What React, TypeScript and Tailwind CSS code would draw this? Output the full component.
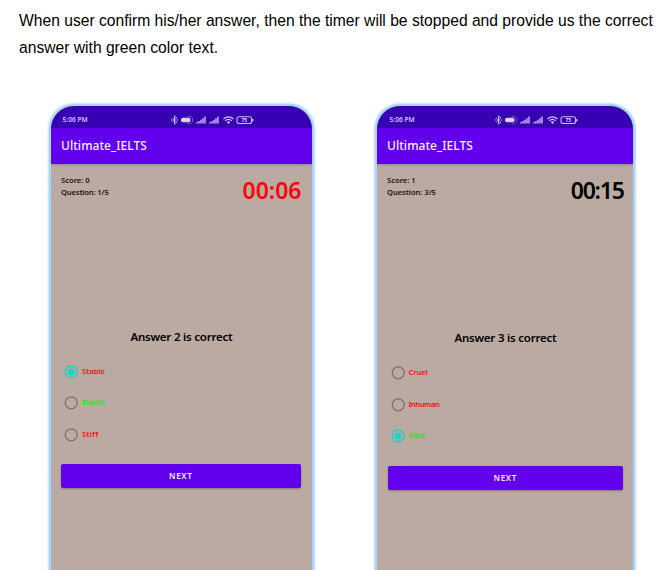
import React from "react";

type Option = { label: string; color: string; spacing: string; selected?: boolean };

type PhoneProps = {
  frame: string;
  statusPad: string;
  iconPad: string;
  score: string;
  question: string;
  questionClass: string;
  time: string;
  timeClass: string;
  answer: string;
  answerClass: string;
  options: Option[];
  optionsClass: string;
  buttonClass: string;
};

function StatusIcons({ className }: { className: string }) {
  return (
    <svg width="83" height="10" viewBox="0 0 83 10" fill="none" className={className}>
      <path d="M1.1 2.9 5.8 7.1 3.5 9.1V.9L5.8 2.9 1.1 7.1" stroke="#cfc2f8" strokeWidth=".9" />
      <path d="M-.4 5h1.5M5.8 5h1.5" stroke="#cfc2f8" strokeWidth="1" />
      <rect x="10" y="2.8" width="9.5" height="4.4" rx="2" fill="#ddd3fc" />
      <path d="M16.5 1.3q5.5 0 5.2 3.7 0 3.7-5.2 3.7" stroke="#7b62d4" strokeWidth="1" />
      {[26, 39].map((x) => (
        <path
          key={x}
          d={`M${x} 7v1.6M${x + 2} 6v2.6M${x + 4} 4.7v3.9M${x + 6} 3.2v5.4M${x + 8} 1.6v7`}
          stroke="#bfb0f3"
          strokeWidth="1.5"
        />
      ))}
      <path d="M52.5 4q5-4.2 10 0M54.2 5.8q3.3-2.7 6.6 0" stroke="#d3c6fa" strokeWidth="1.2" />
      <path d="M55.8 6.9q1.7-1.2 3.4 0L57.5 9z" fill="#d3c6fa" />
      <rect x="66" y="1.8" width="14.5" height="6.7" rx="2" stroke="#c9baf5" strokeWidth="1.1" />
      <path d="M81.7 3.9v2.6" stroke="#c9baf5" strokeWidth="1.4" />
      <text x="73.3" y="6.9" textAnchor="middle" fontSize="4.8" fontWeight="700" fill="#e4dbff" fontFamily="Noto Sans">
        75
      </text>
    </svg>
  );
}

function Radio({ selected }: { selected?: boolean }) {
  return (
    <svg width="14" height="14" viewBox="0 0 14 14" className="shrink-0">
      <circle cx="7.2" cy="6.8" r="6" fill="none" stroke={selected ? "#1fd0c0" : "#7c7371"} strokeWidth="1.35" />
      {selected && <circle cx="7.2" cy="6.8" r="3.4" fill="#08dacb" />}
    </svg>
  );
}

function Phone(p: PhoneProps) {
  return (
    <section
      className={`flex h-[484px] shrink-0 flex-col overflow-hidden rounded-t-[23px] bg-[#bbaaa2] font-['Noto_Sans',sans-serif] shadow-[0_0_0_2px_#a8d5ff,0_0_2px_3px_#b9deff] ${p.frame}`}
    >
      <div className={`flex h-[21.5px] shrink-0 items-center bg-[#3700b3] pt-[7px] ${p.statusPad}`}>
        <span className="w-[26px] whitespace-nowrap text-[6.7px] leading-[8px] font-medium text-[#e5dcff]">5:06 PM</span>
        <StatusIcons className={p.iconPad} />
      </div>
      <header className="flex h-[36.5px] shrink-0 items-center bg-[#6200ee] pl-[10px] shadow-[0_1px_2px_#6b5d6880]">
        <h1 className="whitespace-nowrap text-[12px] leading-[18px] font-medium tracking-[0.05px] text-[#f5efff]">
          Ultimate_IELTS
        </h1>
      </header>
      <div className="flex h-[42px] shrink-0 justify-between pt-[10px] pr-[10.5px] pl-[10px]">
        <div className="whitespace-nowrap text-[7.6px] leading-[12px] font-semibold text-[#171312]">
          <p>{p.score}</p>
          <p className={p.questionClass}>{p.question}</p>
        </div>
        <p className={`whitespace-nowrap text-[23px] leading-[32px] font-semibold ${p.timeClass}`}>{p.time}</p>
      </div>
      <p
        className={`self-center whitespace-nowrap text-[11.5px] leading-[20px] font-semibold tracking-[-0.22px] text-black ${p.answerClass}`}
      >
        {p.answer}
      </p>
      <div className={`flex flex-col gap-[17.3px] ${p.optionsClass}`}>
        {p.options.map((o) => (
          <label key={o.label} className="flex h-[14px] items-center gap-[4px]">
            <Radio selected={o.selected} />
            <span className={`pb-[1px] whitespace-nowrap text-[7.6px] leading-[13px] font-semibold ${o.spacing} ${o.color}`}>
              {o.label}
            </span>
          </label>
        ))}
      </div>
      <button
        className={`flex h-[24px] shrink-0 items-center justify-center rounded-[2px] bg-[#6200ee] text-[8.2px] font-semibold tracking-[0.6px] text-[#f5efff] shadow-[0_1px_2px_#5f50608c] ${p.buttonClass}`}
      >
        NEXT
      </button>
    </section>
  );
}

const RED = "text-[#f20d12]";
const GREEN = "text-[#20e817]";

export default function App() {
  return (
    <main className="h-[570px] w-[665px] overflow-hidden bg-white">
      <div className="h-[106px] pt-[6.5px] pl-[19px] font-['Liberation_Sans',Arial,sans-serif] text-[15.65px] leading-[27px] whitespace-nowrap text-black">
        <p>When user confirm his/her answer, then the timer will be stopped and provide us the correct</p>
        <p>answer with green color text.</p>
      </div>
      <div className="flex gap-[65px] pl-[51px]">
        <Phone
          frame="w-[261px]"
          statusPad="pl-[11.5px]"
          iconPad="ml-[82px]"
          score="Score: 0"
          question="Question: 1/5"
          questionClass="tracking-[-0.15px]"
          time="00:06"
          timeClass="text-[#f5080b]"
          answer="Answer 2 is correct"
          answerClass="mt-[121px]"
          options={[
            { label: "Stable", color: RED, spacing: "tracking-normal", selected: true },
            { label: "Elastic", color: GREEN, spacing: "tracking-normal" },
            { label: "Stiff", color: RED, spacing: "tracking-[0.3px]" },
          ]}
          optionsClass="mt-[18px] pl-[13px]"
          buttonClass="mt-[22.5px] mr-[11px] ml-[9.5px]"
        />
        <Phone
          frame="w-[256px]"
          statusPad="pl-[12.5px]"
          iconPad="ml-[79.5px]"
          score="Score: 1"
          question="Question: 3/5"
          questionClass="tracking-[-0.05px]"
          time="00:15"
          timeClass="text-black tracking-[-1.2px] -mr-[1.2px]"
          answer="Answer 3 is correct"
          answerClass="mt-[122px] pl-[1px]"
          options={[
            { label: "Cruel", color: RED, spacing: "tracking-[-0.1px]" },
            { label: "Inhuman", color: RED, spacing: "tracking-[-0.45px]" },
            { label: "Kind", color: GREEN, spacing: "tracking-[-0.2px]", selected: true },
          ]}
          optionsClass="mt-[18.3px] pl-[13.5px]"
          buttonClass="mt-[23.2px] mr-[10px] ml-[10.5px]"
        />
      </div>
    </main>
  );
}
